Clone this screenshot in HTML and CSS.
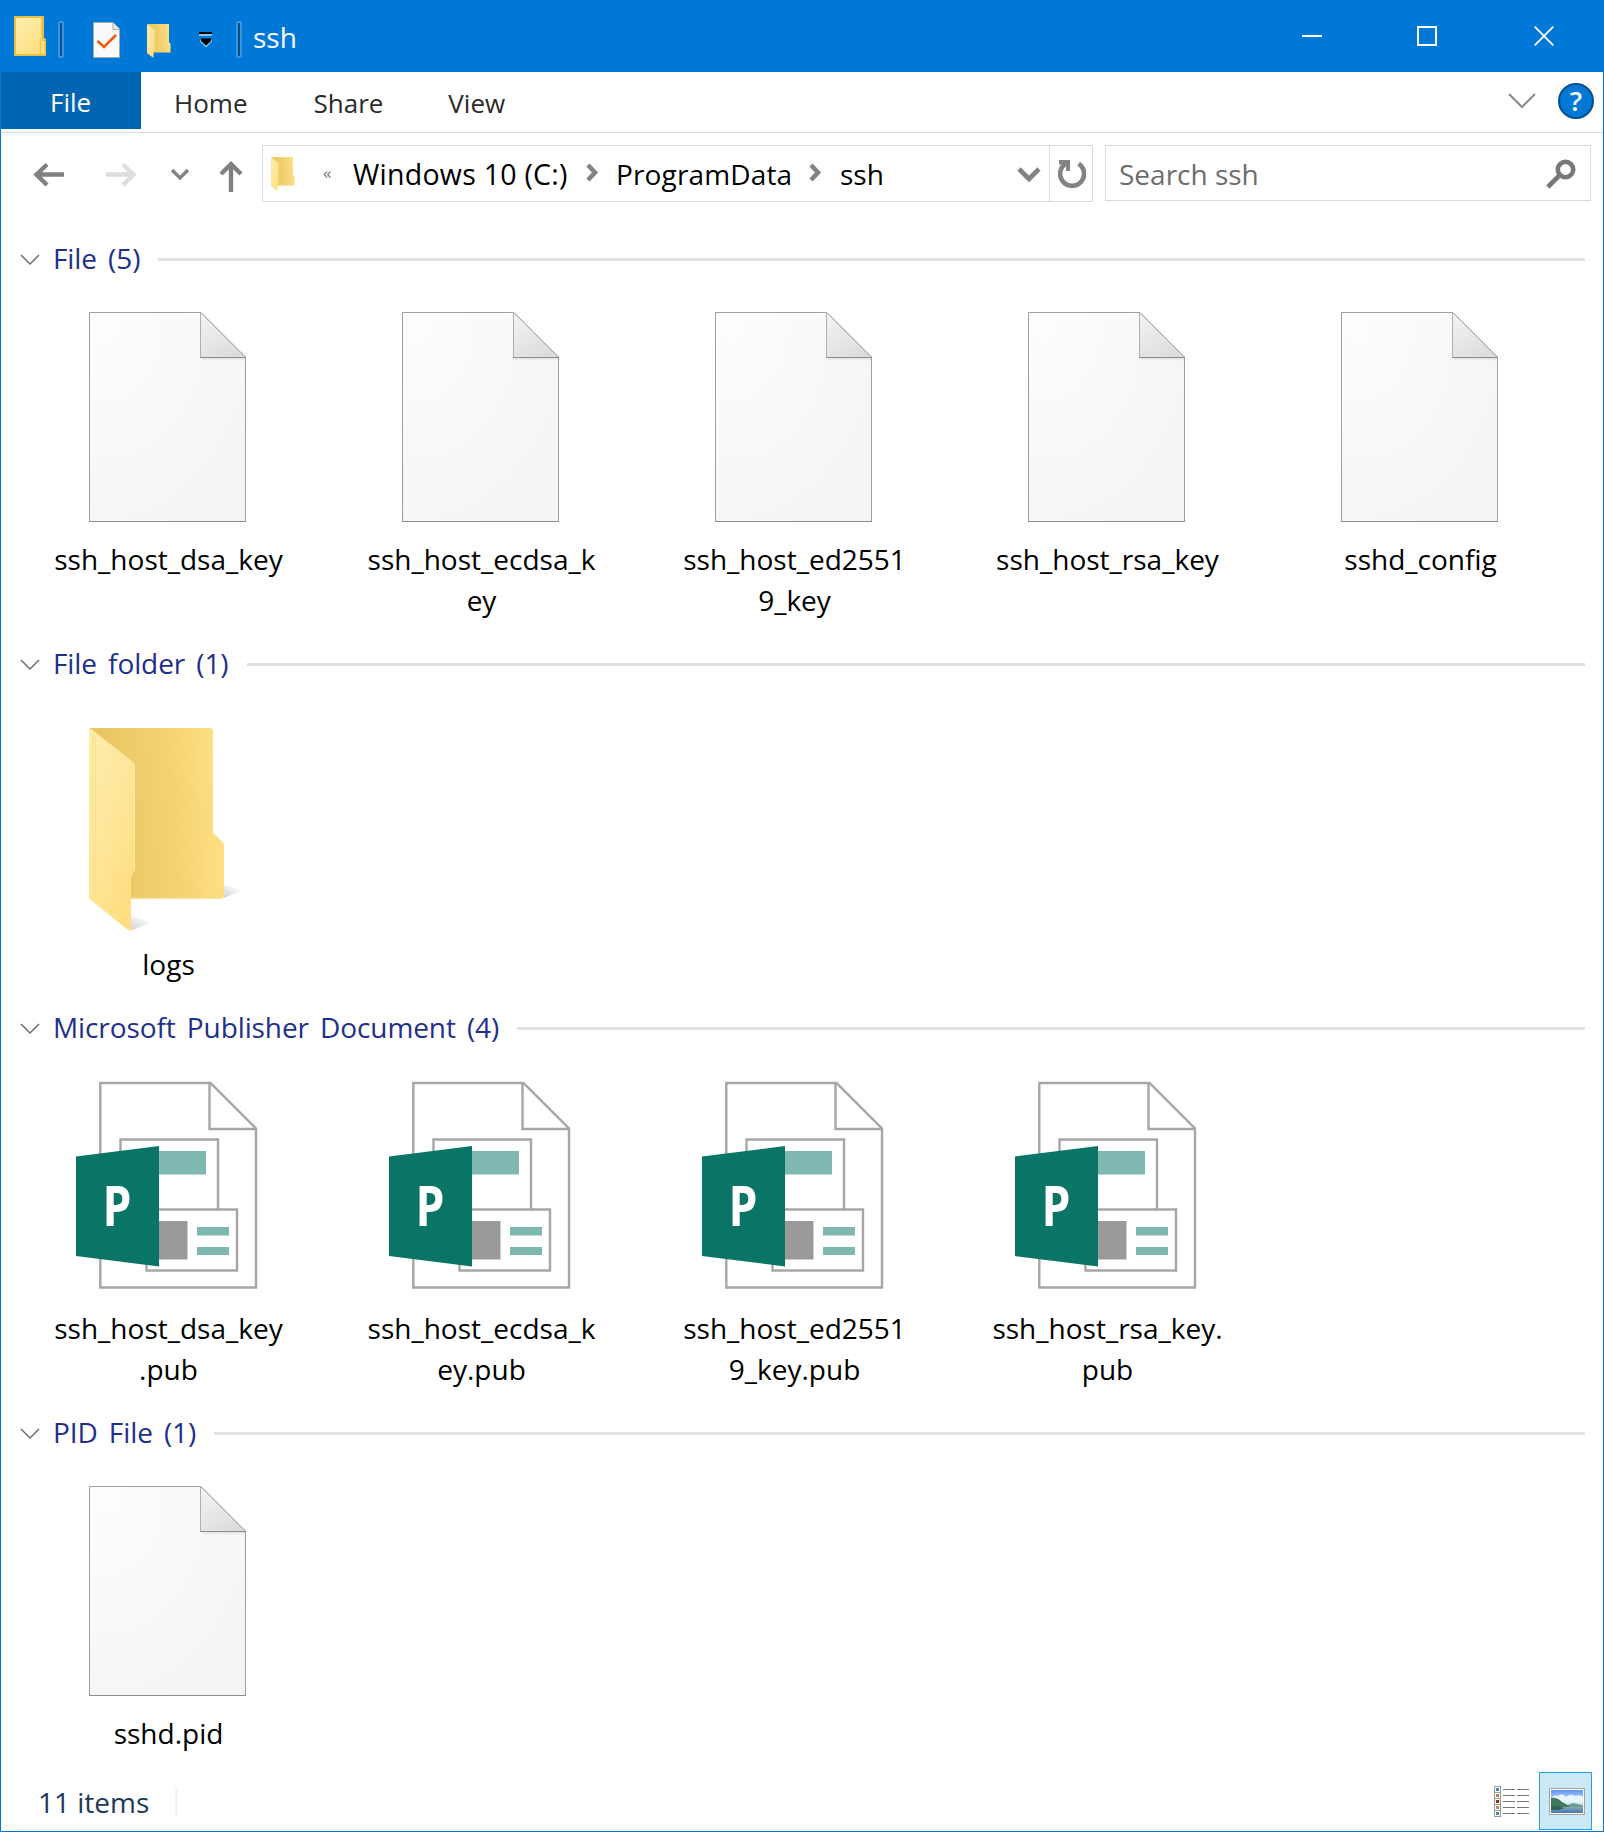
FILE: index.html
```html
<!DOCTYPE html>
<html lang="en">
<head>
<meta charset="utf-8">
<title>ssh</title>
<link rel="stylesheet" href="styles.css">
</head>
<body>
<svg class="defs" width="0" height="0" aria-hidden="true">
  <defs>
    <radialGradient id="paper" cx="0.1" cy="0.05" r="1.05">
      <stop offset="0" stop-color="#fdfdfd"/><stop offset="0.5" stop-color="#f8f9fa"/><stop offset="1" stop-color="#f4f5f7"/>
    </radialGradient>
    <linearGradient id="fold" x1="0" y1="0" x2="0.7" y2="1">
      <stop offset="0" stop-color="#f4f4f4"/><stop offset="1" stop-color="#dcdcdc"/>
    </linearGradient>
    <linearGradient id="foldShade" x1="0" y1="0" x2="0" y2="1">
      <stop offset="0" stop-color="#d9dadb"/><stop offset="1" stop-color="#f6f7f8"/>
    </linearGradient>
    <linearGradient id="back" x1="0" y1="0.35" x2="1" y2="0.25">
      <stop offset="0.1" stop-color="#e9c662"/><stop offset="0.6" stop-color="#f4d271"/><stop offset="1" stop-color="#ffe287"/>
    </linearGradient>
    <linearGradient id="front" x1="0" y1="0" x2="0.6" y2="1">
      <stop offset="0" stop-color="#ffedab"/><stop offset="0.4" stop-color="#fee8a0"/><stop offset="1" stop-color="#ffde82"/>
    </linearGradient>
    <linearGradient id="shadow" x1="0" y1="1" x2="0.7" y2="0.1">
      <stop offset="0" stop-color="#d2d2d4"/><stop offset="1" stop-color="#ffffff"/>
    </linearGradient>
    <linearGradient id="sky" x1="0" y1="0" x2="0" y2="1">
      <stop offset="0" stop-color="#5c96f7"/><stop offset="0.55" stop-color="#d5ebfc"/><stop offset="1" stop-color="#e5f4fb"/>
    </linearGradient>
    <linearGradient id="lake" x1="0" y1="0" x2="0" y2="1">
      <stop offset="0" stop-color="#86a9bd"/><stop offset="1" stop-color="#4377a8"/>
    </linearGradient>
  </defs>
  <symbol id="file" viewBox="12 280 313 259">
    <path d="M89.5 312.5H201L245.5 357V521.5H89.5Z" fill="url(#paper)" stroke="#a0a0a0"/>
    <path d="M202 357H245V361H202Z" fill="url(#foldShade)"/>
    <path d="M200.5 312.5L245.5 357.5H200.5Z" fill="url(#fold)" stroke="#b0b0b0"/>
    <path d="M200 357.5H246M89 521.5H246" stroke="#8c8d8f"/>
  </symbol>
  <symbol id="folder" viewBox="12 685 313 259">
    <path d="M224 885L243 889.500L224 898Z" fill="url(#shadow)"/>
    <path d="M131 916L153 922L131 930.500Z" fill="url(#shadow)"/>
    <path d="M89 728H209.500Q213 728 213 731.500V832.500L224 843.500V895.500Q224 898.500 221 898.500H125V760Z" fill="url(#back)"/>
    <path d="M131 898H222" stroke="#fadb7c"/>
    <path d="M89 728L133 762.500Q135 764 135 766.500V870.500L131 877V929Q130.500 932 128 930L89 898.500Z" fill="url(#front)"/>
    <path d="M92.500 736V898M95.500 738V898" stroke="#ffe18c"/>
    <path d="M90 728.500L133 762.500Q134.500 764 134.500 766.500V870" fill="none" stroke="#ffeba8"/>
  </symbol>
  <symbol id="publisher" viewBox="12 1049 313 259" overflow="visible">
    <path d="M100.300 1083H210.500L256 1128.500V1287.500H100.300Z" fill="#fff" stroke="#a6a6a6" stroke-width="2.400"/>
    <path d="M209.500 1083V1129H256" fill="none" stroke="#a6a6a6" stroke-width="2.400"/>
    <path d="M120.500 1209V1139.500H218V1209" fill="#fff" stroke="#a6a6a6" stroke-width="2.400"/>
    <path d="M158 1151H206V1174.500H158Z" fill="#7eb8b1"/>
    <path d="M146.500 1209.500H237V1270.500H146.500Z" fill="#fff" stroke="#a6a6a6" stroke-width="2.400"/>
    <path d="M158 1221H187.500V1259.500H158Z" fill="#999"/>
    <path d="M197 1227H229V1235.500H197ZM197 1247H229V1255H197Z" fill="#7eb8b1"/>
    <path d="M76 1156.500L159 1146V1266.500L76 1256Z" fill="#0a7466"/>
    <text class="pub-letter" x="102.500" y="1226" textLength="29" lengthAdjust="spacingAndGlyphs">P</text>
  </symbol>
  <symbol id="chevron" viewBox="0 0 20 12">
    <path d="M1 1L10 10L19 1" fill="none" stroke="#6d6d6d" stroke-width="1.500"/>
  </symbol>
  <symbol id="small-folder" viewBox="0 0 24 34">
    <path d="M0 0H22V18L23.500 20V28.500H6V6Z" fill="url(#back)"/>
    <path d="M0 0L7.500 6V27L6.500 28V34L0 29Z" fill="url(#front)"/>
  </symbol>
</svg>

<div class="window">
  <header class="titlebar">
    <div class="quick-access">
      <svg class="app-icon" viewBox="0 0 32 40">
        <path d="M0 0H30V22.500H32V40H0Z" fill="#e6c043"/>
        <path d="M2 2H27.500V38H2Z" fill="url(#front)"/>
        <path d="M27.500 2V22M26 23.500H31M26.500 23V38" fill="none" stroke="#efcb55"/>
        <path d="M28 25H30.500V38H28Z" fill="#ffe27e"/>
      </svg>
      <span class="bar"></span>
      <svg class="props-icon" viewBox="0 0 27 36">
        <path d="M.5.5H20L26.500 7V35.500H.5Z" fill="#f8f9fb" stroke="#a9a5a0"/>
        <path d="M20 .5V7.500H26.500" fill="#ececec" stroke="#a9a5a0"/>
        <path d="M4.500 19L11 25L23 13" fill="none" stroke="#f15a12" stroke-width="2.700"/>
      </svg>
      <svg class="new-folder-icon"><use href="#small-folder"/></svg>
      <svg class="customize-icon" viewBox="0 0 14 16">
        <path d="M0 1H13" stroke="#000" stroke-width="2"/><path d="M0 3H13" stroke="#8fc4f2" stroke-width="2"/>
        <path d="M1 7H13V9.500L7 15.500L1 9.500Z" fill="#8fc4f2"/><path d="M1.500 6.500H12.500L12 9L7 13.500L2 9Z" fill="#000"/>
      </svg>
      <span class="bar bar-title"></span>
    </div>
    <h1 class="title">ssh</h1>
    <div class="controls">
      <svg class="control" viewBox="0 0 20 20"><path d="M0 10H20" stroke="#fff" stroke-width="2"/></svg>
      <svg class="control" viewBox="0 0 20 20"><path d="M1 1H19V19H1Z" fill="none" stroke="#fff" stroke-width="2"/></svg>
      <svg class="control control-close" viewBox="0 0 20 20"><path d="M.7.700L19.300 19.300M19.300.7L.7 19.300" stroke="#fff" stroke-width="1.800"/></svg>
    </div>
  </header>

  <nav class="ribbon">
    <span class="tab tab-file">File</span>
    <span class="tab tab-home">Home</span>
    <span class="tab tab-share">Share</span>
    <span class="tab tab-view">View</span>
    <svg class="expand" viewBox="0 0 28 16"><path d="M1 1L14 14L27 1" fill="none" stroke="#8a8a8a" stroke-width="2"/></svg>
    <span class="help">?</span>
  </nav>

  <div class="navbar">
    <svg class="history" viewBox="1 133 261 80">
      <g fill="none" stroke="#808080" stroke-width="4.400">
        <path d="M64 174.500H36M47 164.500L36.500 174.500L47 185"/>
        <path d="M106 174.500H134M123 164.500L133.500 174.500L123 185" stroke="#dedede"/>
        <path d="M172 170L180 178L188 170" stroke-width="3.200"/>
        <path d="M231 192V164.500M221 174L231 164L241 174"/>
      </g>
    </svg>
    <div class="address">
      <svg class="address-icon"><use href="#small-folder"/></svg>
      <span class="overflow">«</span>
      <span class="crumb crumb-drive">Windows 10 (C:)</span>
      <svg class="sep" viewBox="0 0 13 19"><path d="M2 2L9 9.500L2 17" fill="none" stroke="#838383" stroke-width="4.600"/></svg>
      <span class="crumb crumb-data">ProgramData</span>
      <svg class="sep" viewBox="0 0 13 19"><path d="M2 2L9 9.500L2 17" fill="none" stroke="#838383" stroke-width="4.600"/></svg>
      <span class="crumb">ssh</span>
      <svg class="drop" viewBox="0 0 24 16"><path d="M2 2L12 12L22 2" fill="none" stroke="#838383" stroke-width="4.600"/></svg>
      <div class="refresh">
        <svg viewBox="0 0 28 28">
          <path d="M20.600 3.700A12 12 0 1 1 8 3.500" fill="none" stroke="#838383" stroke-width="4.600"/>
          <path d="M1 0H12V11H8V4.500H1Z" fill="#838383"/>
        </svg>
      </div>
    </div>
    <div class="search">
      <span>Search ssh</span>
      <svg class="search-icon" viewBox="0 0 30 30">
        <circle cx="19.500" cy="10.500" r="7.700" fill="none" stroke="#787878" stroke-width="4.600"/>
        <path d="M13.800 16L1.800 28" stroke="#787878" stroke-width="4.600"/>
      </svg>
    </div>
  </div>

  <main class="content">
    <section class="group">
      <h2 class="group-head"><svg class="chev"><use href="#chevron"/></svg><span>File (5)</span></h2>
      <div class="items">
        <div class="item"><svg class="art"><use href="#file"/></svg><span>ssh_host_dsa_key</span></div>
        <div class="item"><svg class="art"><use href="#file"/></svg><span>ssh_host_ecdsa_k<br>ey</span></div>
        <div class="item"><svg class="art"><use href="#file"/></svg><span>ssh_host_ed2551<br>9_key</span></div>
        <div class="item"><svg class="art"><use href="#file"/></svg><span>ssh_host_rsa_key</span></div>
        <div class="item"><svg class="art"><use href="#file"/></svg><span>sshd_config</span></div>
      </div>
    </section>
    <section class="group">
      <h2 class="group-head"><svg class="chev"><use href="#chevron"/></svg><span>File folder (1)</span></h2>
      <div class="items">
        <div class="item"><svg class="art"><use href="#folder"/></svg><span>logs</span></div>
      </div>
    </section>
    <section class="group">
      <h2 class="group-head"><svg class="chev"><use href="#chevron"/></svg><span>Microsoft Publisher Document (4)</span></h2>
      <div class="items">
        <div class="item"><svg class="art"><use href="#publisher"/></svg><span>ssh_host_dsa_key<br>.pub</span></div>
        <div class="item"><svg class="art"><use href="#publisher"/></svg><span>ssh_host_ecdsa_k<br>ey.pub</span></div>
        <div class="item"><svg class="art"><use href="#publisher"/></svg><span>ssh_host_ed2551<br>9_key.pub</span></div>
        <div class="item"><svg class="art"><use href="#publisher"/></svg><span>ssh_host_rsa_key.<br>pub</span></div>
      </div>
    </section>
    <section class="group">
      <h2 class="group-head"><svg class="chev"><use href="#chevron"/></svg><span>PID File (1)</span></h2>
      <div class="items">
        <div class="item"><svg class="art"><use href="#file"/></svg><span>sshd.pid</span></div>
      </div>
    </section>
  </main>

  <footer class="status">
    <span class="count">11 items</span>
    <svg class="details-view" viewBox="0 0 36 31">
      <path d="M0 0H7V31H0Z" fill="#9a9a9a"/>
      <path d="M1 1H6V6H1ZM1 7H6V12H1ZM1 13H6V18H1ZM1 19H6V24H1ZM1 25H6V30H1Z" fill="#fff"/>
      <path d="M2 2H5V5H2ZM2 26H5V29H2Z" fill="#3f86c0"/><path d="M2 8H5V11H2Z" fill="#a58a3c"/>
      <path d="M2 14H5V17H2Z" fill="#c01c10"/><path d="M2 20H5V23H2Z" fill="#c98b4d"/>
      <path d="M9 3.500H21M23 3.500H35M9 9.500H21M23 9.500H35M9 15.500H21M23 15.500H35M9 21.500H21M23 21.500H35M9 27.500H21M23 27.500H35" stroke="#757575"/>
    </svg>
    <div class="thumb-view">
      <svg viewBox="0 0 36 27">
        <path d="M.5.5H35.500V26.500H.5Z" fill="#fff" stroke="#a3a3a3"/>
        <path d="M2 2H34V25H2Z" fill="url(#sky)"/>
        <path d="M2 11Q5 6 9 8Q13 4 17 9Q22 5 26 8Q30 6 34 9V14H2Z" fill="#e9f5fd"/>
        <path d="M14 20L18 17L24 15L29 16L34 17V20Z" fill="#6c9d94"/>
        <path d="M2 10Q8 9 13 14Q19 17 23 20H2Z" fill="#3f7a5f"/>
        <path d="M2 19H34V25H2Z" fill="url(#lake)"/>
        <path d="M2 18Q10 18 16 20L9 22H2Z" fill="#2f6358"/>
      </svg>
    </div>
  </footer>
</div>
</body>
</html>
```
FILE: styles.css
```css
* { box-sizing: border-box; }

body {
  margin: 0;
  background: #fff;
  font-family: "Open Sans", "Noto Sans", sans-serif;
  font-size: 28px;
  color: #000;
}

h1, h2 { margin: 0; font-size: inherit; font-weight: 400; }
svg { display: block; flex: none; }
.defs { position: absolute; }

.window {
  display: flex;
  flex-direction: column;
  width: 1604px;
  height: 1832px;
  border: 1px solid #0078d7;
  border-top: 0;
}

/* Title bar */
.titlebar {
  display: flex;
  flex: none;
  height: 72px;
  background: #0078d7;
  color: #fff;
}
.quick-access { display: flex; align-items: flex-start; padding-left: 13px; }
.app-icon { width: 32px; height: 40px; margin-top: 16px; }
.bar {
  width: 6px;
  height: 37px;
  margin: 21px 0 0 12px;
  border: 2px solid #3a95e0;
  border-radius: 2px;
  background: #0b4d87;
}
.props-icon { width: 27px; height: 36px; margin: 22px 0 0 29px; }
.new-folder-icon { width: 24px; height: 34px; margin: 24px 0 0 27px; }
.customize-icon { width: 14px; height: 16px; margin: 32px 0 0 28px; }
.bar-title { margin-left: 23px; }
.title { margin-left: 11px; line-height: 74px; }
.controls { display: flex; margin-left: auto; gap: 95px; padding: 26px 49px 0 0; }
.control { width: 20px; height: 20px; }
.control-close { margin-left: 2px; }

/* Ribbon tabs */
.ribbon {
  display: flex;
  flex: none;
  height: 61px;
  border-bottom: 1px solid #dadbdc;
  font-size: 26px;
  line-height: 63px;
  color: #2b2b2b;
}
.tab-file {
  width: 140px;
  height: 57px;
  padding-left: 49px;
  background: #0066b3;
  color: #fff;
  line-height: 60px;
}
.tab-home { margin-left: 33px; }
.tab-share { margin-left: 66px; }
.tab-view { margin-left: 65px; }
.expand { width: 28px; height: 16px; margin: 21px 22px 0 auto; }
.help {
  width: 36px;
  height: 36px;
  margin: 11px 9px 0 0;
  border: 2px solid #00508f;
  border-radius: 50%;
  background: #0078d7;
  color: #fff;
  font-size: 27px;
  font-weight: 600;
  line-height: 32px;
  text-align: center;
}

/* Navigation row */
.navbar { display: flex; flex: none; height: 106px; }
.history { width: 261px; height: 80px; }
.address {
  display: flex;
  width: 831px;
  height: 57px;
  margin: 12px 12px 0 0;
  border: 1px solid #d9d9d9;
  line-height: 57px;
}
.address-icon { width: 24px; height: 34px; margin: 11px 0 0 8px; }
.overflow { width: 30px; margin-left: 28px; color: #777; font-size: 17px; line-height: 53px; }
.crumb-drive { width: 233px; font-size: 28.500px; letter-spacing: 0.250px; }
.crumb-data { width: 193px; margin-left: 17px; letter-spacing: 0.150px; }
.sep { width: 13px; height: 19px; margin-top: 17px; }
.sep + .crumb:not(.crumb-data) { margin-left: 18px; }
.drop { width: 24px; height: 16px; margin: 21px 8px 0 auto; }
.refresh { width: 43px; border-left: 1px solid #d9d9d9; padding: 14px 0 0 8px; }
.refresh svg { width: 28px; height: 28px; }
.search {
  display: flex;
  width: 486px;
  height: 56px;
  margin-top: 12px;
  padding-left: 13px;
  border: 1px solid #d9d9d9;
  color: #6d6d6d;
  line-height: 57px;
}
.search-icon { width: 30px; height: 30px; margin: 13px 14px 0 auto; }

/* Grouped items */
.content { flex: 1; padding-left: 11px; }
.group { padding-bottom: 23px; }
.group:last-child { padding-bottom: 0; }
.group-head {
  display: flex;
  align-items: center;
  height: 41px;
  padding: 0 18px 0 8px;
  color: #1e2f8c;
  letter-spacing: -0.100px;
  word-spacing: 4px;
  line-height: 38px;
}
.group-head span { height: 41px; margin-left: 13px; }
.group-head::after { content: ""; flex: 1; height: 3px; margin-left: 18px; background: #e2e2e2; }
.chev { width: 20px; height: 12px; }
.items { display: flex; }
.item { width: 313px; line-height: 41px; text-align: center; }
.item span { display: block; }
.art { width: 313px; height: 259px; overflow: visible; }
.pub-letter { font: 700 55px "Open Sans", sans-serif; fill: #fff; }

/* Status bar */
.status { display: flex; flex: none; height: 59px; color: #1e395b; }
.count { width: 177px; height: 28px; margin-top: 16px; padding-left: 37px; border-right: 3px solid #f5f5f5; line-height: 28px; }
.details-view { width: 36px; height: 31px; margin: 14px 9px 0 auto; }
.thumb-view {
  width: 53px;
  height: 58px;
  margin-right: 11px;
  padding: 15px 0 0 9px;
  border: 1px solid #26a0da;
  background: #cce8f6;
}
.thumb-view svg { width: 36px; height: 27px; }
```
